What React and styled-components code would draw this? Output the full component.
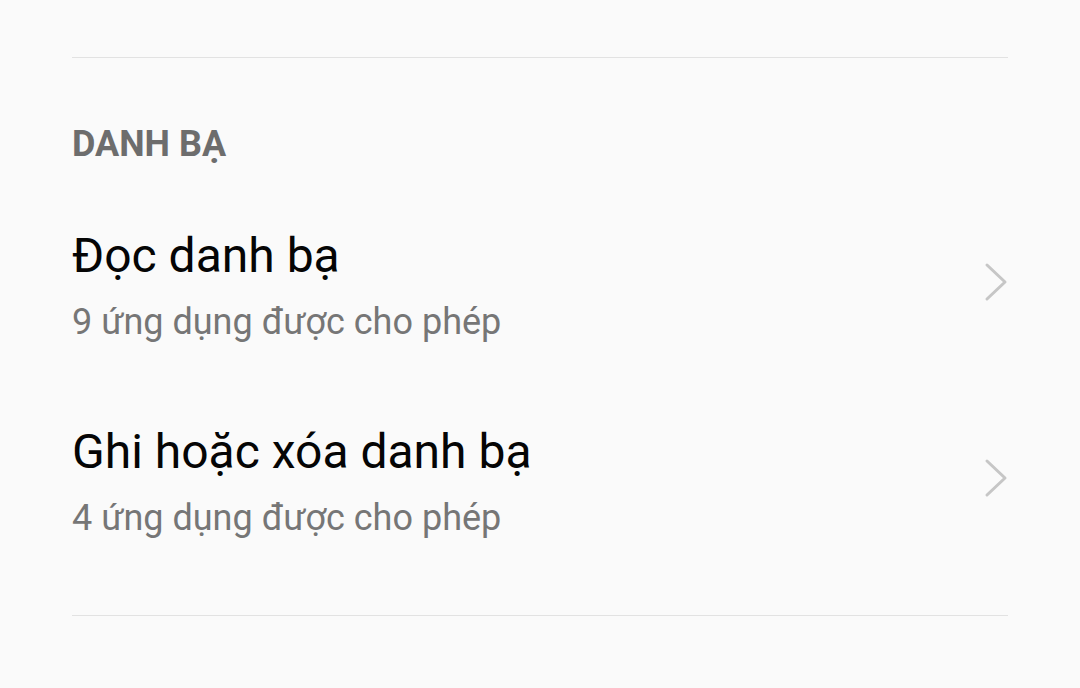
import React from "react";
import styled, { createGlobalStyle } from "styled-components";

const GlobalStyle = createGlobalStyle`
  body {
    margin: 0;
    background: #fafafa;
    font-family: Roboto, "Noto Sans", sans-serif;
  }
`;

const permissions = [
  { title: "Đọc danh bạ", count: 9 },
  { title: "Ghi hoặc xóa danh bạ", count: 4 },
];

const Chevron = () => (
  <ChevronIcon width="24" height="40" viewBox="0 0 24 40" fill="none">
    <polyline
      points="3,3 21,20 3,37"
      stroke="#c6c6c6"
      strokeWidth="3"
      strokeLinecap="round"
      strokeLinejoin="round"
    />
  </ChevronIcon>
);

const App = () => {
  return (
    <StyledPage>
      <GlobalStyle />
      <Divider />
      <SectionHeader>DANH BẠ</SectionHeader>
      <List>
        {permissions.map((p) => (
          <Row key={p.title}>
            <RowText>
              <Title>{p.title}</Title>
              <Subtitle>{p.count} ứng dụng được cho phép</Subtitle>
            </RowText>
            <Chevron />
          </Row>
        ))}
      </List>
      <Divider />
    </StyledPage>
  );
};

const StyledPage = styled.div`
  padding: 57px 72px 0;
  min-height: 688px;
  box-sizing: border-box;
`;

const Divider = styled.div`
  height: 1px;
  background: #e2e2e2;
`;

const SectionHeader = styled.h4`
  margin: 66px 0 0;
  font-size: 36px;
  line-height: 40px;
  font-weight: 700;
  color: #6d6d6d;
`;

const List = styled.div`
  display: flex;
  flex-direction: column;
  padding: 24px 0 35px;
`;

const Row = styled.div`
  display: flex;
  align-items: center;
  justify-content: space-between;
  padding: 40px 0;
`;

const RowText = styled.div`
  display: flex;
  flex-direction: column;
  gap: 16px;
`;

const ChevronIcon = styled.svg`
  margin-top: -8px;
`;

const Title = styled.div`
  font-size: 48px;
  line-height: 56px;
  color: #050505;
`;

const Subtitle = styled.div`
  font-size: 36px;
  line-height: 44px;
  color: #767676;
`;

export default App;
